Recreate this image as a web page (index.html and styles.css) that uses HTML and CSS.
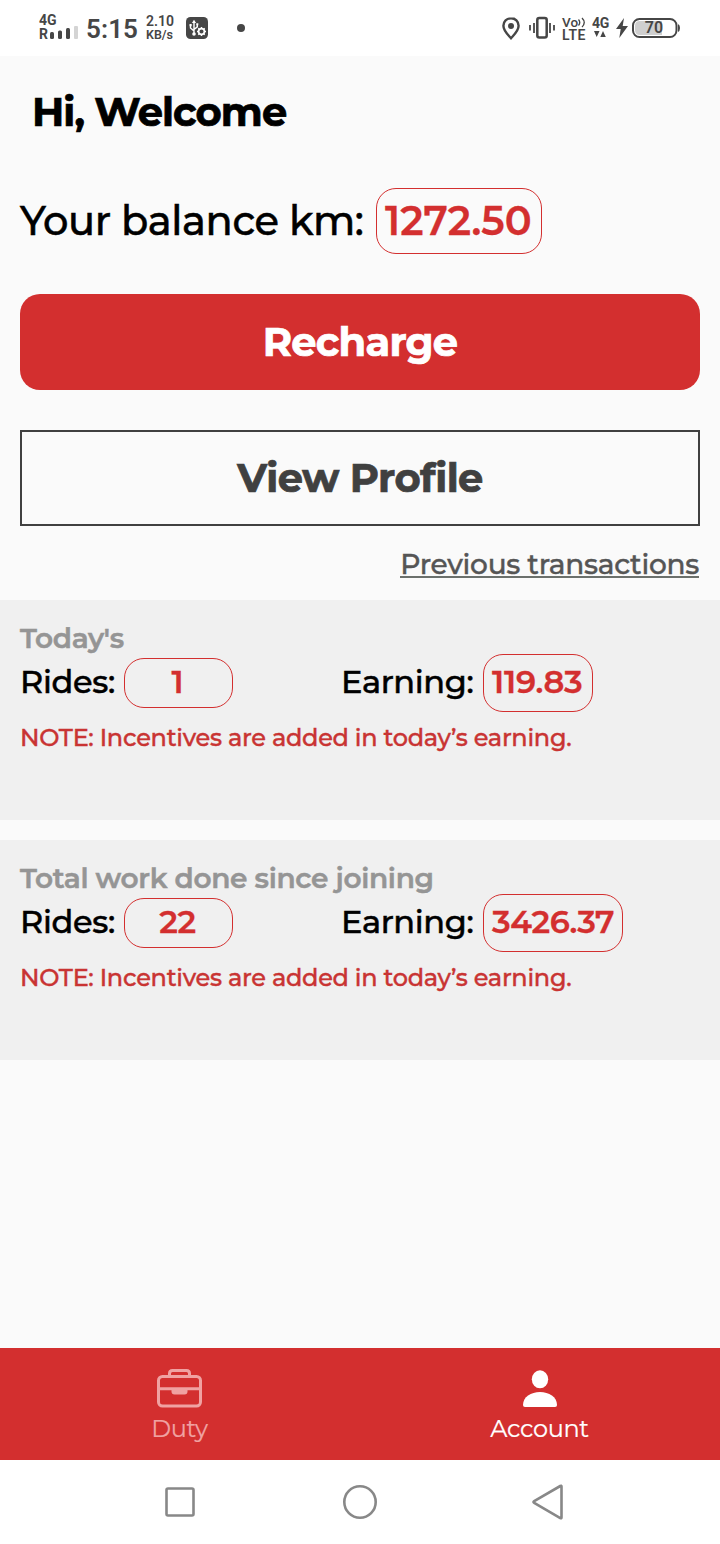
FILE: index.html
```html
<!DOCTYPE html>
<html lang="en">
<head>
<meta charset="utf-8">
<title>Account</title>
<link rel="stylesheet" href="styles.css">
</head>
<body>
<div class="screen">
  <header class="status">
    <div class="signal">
      <div class="net">4G</div>
      <div class="bars"><span>R</span><svg width="29" height="14" viewBox="0 0 29 14"><rect x="0" y="7" width="4" height="7" rx="1.500"/><rect x="8" y="5.500" width="4" height="8.500" rx="1.500"/><rect x="16" y="3" width="4" height="11" rx="1.500"/><rect class="dim" x="24" y="1" width="4" height="13" rx="1"/></svg></div>
    </div>
    <div class="time">5:15</div>
    <div class="speed"><div class="rate">2.10</div><div>KB/s</div></div>
    <svg class="usb" width="22" height="22" viewBox="0 0 22 22"><rect width="22" height="22" rx="4.500" fill="#464646"/><g fill="none" stroke="#fff" stroke-width="1.400"><path d="M8 5v12M4.500 8.500v2.500l3.500 3M11.300 7.500v2.300L8 12.500"/><circle cx="15.500" cy="14.500" r="2.900" stroke-width="1.700"/><path d="M15.500 10v1.600M15.500 17.400V19M11 14.500h1.600M18.400 14.500H20M12.300 11.300l1.200 1.200M17.500 16.500l1.200 1.200M18.700 11.300l-1.200 1.200M13.500 16.500l-1.200 1.200"/></g><path d="M8 2.800 5.900 6h4.200z" fill="#fff"/><circle cx="8" cy="17" r="1.800" fill="#fff"/><path d="M3.500 7h2.200v2.200H3.500zM10.300 6.300h2v2h-2z" fill="#fff"/></svg>
    <i class="dot"></i>
    <div class="status-right">
      <svg class="pin" width="18" height="23" viewBox="0 0 18 23"><path d="M9 1.300C4.700 1.300 1.400 4.500 1.400 8.800 1.400 14 6.200 18 9 21.200 11.800 18 16.600 14 16.600 8.800 16.600 4.500 13.300 1.300 9 1.300z" fill="none" stroke="#464646" stroke-width="2.400"/><circle cx="9" cy="9" r="3" fill="#464646"/></svg>
      <svg class="vibrate" width="26" height="24" viewBox="0 0 26 24" fill="none" stroke="#464646" stroke-width="2"><rect x="8.300" y="2" width="9.400" height="19.500" rx="2" stroke-width="2.500"/><path d="M5 7v10M1 9v5.500M21 7v10M25 9v5.500" stroke-width="1.800"/></svg>
      <div class="volte"><div class="vo">Vo<svg width="9" height="11" viewBox="0 0 9 11"><path d="M.500 2.500q2.500 3 0 6M4 1q4.500 4.500 0 9" fill="none" stroke="#464646" stroke-width="1.300"/></svg></div><div class="lte">LTE</div></div>
      <div class="data"><div>4G</div><svg width="12" height="6" viewBox="0 0 12 6"><path d="M0 0h5.500L2.700 6zM6.300 6h5.500L9 0z" fill="#464646"/></svg></div>
      <svg class="bolt" width="12" height="20" viewBox="0 0 12 20"><path d="M8 0 0 11h4.700L3.300 20 12 8H6.700z" fill="#464646"/></svg>
      <svg class="battery" width="49" height="20" viewBox="0 0 49 20"><rect x="1" y="1" width="43.500" height="18" rx="6.500" fill="#fff" stroke="#464646" stroke-width="2"/><path d="M8 3h22v14H8q-5 0-5-5V8q0-5 5-5z" fill="#cfcfcf"/><path d="M46 6q2 1 2 4t-2 4z" fill="#464646"/><text x="22" y="15.300" text-anchor="middle">70</text></svg>
    </div>
  </header>

  <main>
    <h1>Hi, Welcome</h1>
    <div class="balance"><span class="balance-label">Your balance km:</span><b class="pill pill-lg">1272.50</b></div>
    <button class="btn recharge">Recharge</button>
    <button class="btn profile">View Profile</button>
    <div class="prev"><a class="prev-link">Previous transactions</a></div>

    <section class="card">
      <h2>Today's</h2>
      <div class="row">
        <div class="rides"><span class="rides-label">Rides:</span><b class="pill count">1</b></div>
        <div class="earning"><span class="earning-label">Earning:</span><b class="pill sum sum-day">119.83</b></div>
      </div>
      <p class="note">NOTE: Incentives are added in today’s earning.</p>
    </section>
    <section class="card">
      <h2>Total work done since joining</h2>
      <div class="row">
        <div class="rides"><span class="rides-label">Rides:</span><b class="pill count">22</b></div>
        <div class="earning"><span class="earning-label">Earning:</span><b class="pill sum sum-all">3426.37</b></div>
      </div>
      <p class="note">NOTE: Incentives are added in today’s earning.</p>
    </section>
  </main>

  <nav class="tabs">
    <div class="tab duty">
      <svg width="46" height="42" viewBox="0 0 46 42" fill="none" stroke="currentColor" stroke-width="3"><rect x="1.500" y="9.500" width="42" height="29.500" rx="4"/><path d="M12.500 9V6.500q0-3 3-3h14q3 0 3 3V9M2 21.700h42"/><path d="M14.500 22h16v2.500q0 3-3 3h-10q-3 0-3-3z" fill="currentColor" stroke="none"/></svg>
      <span>Duty</span>
    </div>
    <div class="tab account">
      <svg width="46" height="42" viewBox="0 0 46 42" fill="currentColor"><ellipse cx="23" cy="12.300" rx="8.200" ry="9"/><path d="M6 38C6 30 14 25 23 25s17 5 17 13q0 2-2 2H8q-2 0-2-2z"/></svg>
      <span>Account</span>
    </div>
  </nav>
  <footer class="sysnav">
    <svg width="32" height="32" viewBox="0 0 32 32"><rect x="2.500" y="2.500" width="27" height="27" rx="1.500"/></svg>
    <svg width="36" height="36" viewBox="0 0 36 36"><circle cx="18" cy="18" r="15.700"/></svg>
    <svg width="36" height="38" viewBox="0 0 36 38"><path d="M32.500 3.500v31q0 1.200-1.200.6L5.200 20q-1.500-1 0-2L31.300 3q1.200-.7 1.200.5z"/></svg>
  </footer>
</div>
</body>
</html>
```
FILE: styles.css
```css
* { box-sizing: border-box; }
body { margin: 0; background: #fafafa; font-family: Montserrat, Inter, sans-serif; color: #000; }
.screen { width: 720px; height: 1544px; display: flex; flex-direction: column; white-space: nowrap; }
h1, h2, p { margin: 0; }
svg { display: block; flex: none; }

.status { height: 56px; background: #fff; display: flex; align-items: flex-start; color: #464646; font-family: Roboto, sans-serif; padding-left: 39px; }
.signal { width: 47px; padding-top: 13px; font-weight: 700; font-size: 14px; line-height: 14px; }
.bars { display: flex; align-items: flex-start; gap: 1px; font-size: 14px; }
.bars span { width: 10px; }
.bars svg { margin-top: -2px; fill: #464646; }
.bars .dim { fill: #d4d4d4; }
.time { width: 60px; padding-top: 14px; font-size: 26px; line-height: 30px; font-weight: 600; letter-spacing: .1px; }
.speed { width: 40px; padding-top: 15px; font-size: 12.500px; line-height: 14px; font-weight: 600; }
.rate { font-size: 14px; line-height: 13px; }
.usb { margin-top: 17px; }
.dot { width: 8px; height: 8px; margin: 24px 0 0 29px; border-radius: 50%; background: #464646; }
.status-right { display: flex; margin-left: 257px; }
.pin { margin-top: 17px; }
.vibrate { margin: 16px 0 0 9px; }
.volte { width: 30px; margin: 16px 0 0 7px; font-size: 13px; line-height: 12px; font-weight: 600; }
.vo { display: flex; align-items: center; height: 12px; font-size: 13.500px; font-weight: 500; }
.lte { font-size: 14px; line-height: 14px; letter-spacing: .5px; }
.data { width: 24px; margin-top: 16px; font-size: 14px; line-height: 15px; font-weight: 700; letter-spacing: -.4px; }
.data svg { margin: 0 0 0 2px; }
.bolt { margin-top: 18px; }
.battery { margin: 18px 0 0 4px; }
.battery text { font: 600 16px Roboto, sans-serif; fill: #464646; }

main { flex: 1; }
h1 { padding: 36px 0 0 32px; font-size: 40px; line-height: 40px; font-weight: 700; letter-spacing: -.95px; -webkit-text-stroke: .7px; }
.balance { display: flex; align-items: center; height: 66px; margin: 56px 20px 0; font-size: 40px; font-weight: 500; }
.balance-label { width: 356px; flex: none; padding-bottom: 1px; letter-spacing: -.4px; -webkit-text-stroke: .5px; }
.pill { display: flex; align-items: center; border: 1px solid #d32f2f; border-radius: 20px; color: #d32f2f; font-weight: 600; flex: none; -webkit-text-stroke: .3px; }
.pill-lg { width: 166px; height: 66px; padding: 0 0 1px 8px; }
.btn { display: flex; align-items: center; justify-content: center; width: 680px; height: 96px; margin: 40px 20px 0; padding: 0 0 2px; font: 700 40px Montserrat, Inter, sans-serif; letter-spacing: -.75px; -webkit-text-stroke: .7px; }
.recharge { border: 0; border-radius: 20px; background: #d32f2f; color: #fff; }
.profile { border: 2px solid #404040; background: #fafafa; color: #404040; letter-spacing: -.55px; }
.prev { display: flex; justify-content: flex-end; height: 74px; padding: 22px 21px 0 0; font-size: 28px; line-height: 32px; font-weight: 500; letter-spacing: -.27px; color: #555; -webkit-text-stroke: .4px; }
.prev-link { height: 30px; border-bottom: 2px solid #6b706c; }

.card { height: 220px; margin-bottom: 20px; padding: 22px 20px 0; background: #f0f0f0; }
h2 { height: 32px; font-size: 28px; line-height: 33px; font-weight: 600; letter-spacing: -.32px; color: #959595; -webkit-text-stroke: .5px; }
.row { display: flex; align-items: center; height: 58px; font-size: 32px; line-height: 38px; font-weight: 500; letter-spacing: -.35px; }
.rides { display: flex; align-items: center; width: 321px; }
.rides-label, .earning-label { padding-bottom: 2px; -webkit-text-stroke: .5px; }
.rides-label { width: 104px; }
.count { justify-content: center; width: 109px; height: 50px; padding: 0 2px 2px 0; }
.earning { display: flex; align-items: center; }
.earning-label { width: 142px; }
.sum { height: 58px; padding: 0 0 2px 8px; }
.sum-day { width: 110px; letter-spacing: -.2px; }
.sum-all { width: 140px; letter-spacing: -.45px; }
.note { margin-top: 10px; font-size: 24px; line-height: 32px; font-weight: 500; letter-spacing: -.27px; color: #c93433; -webkit-text-stroke: .4px; }

.tabs { display: flex; height: 112px; background: #d32f2f; font-size: 24px; line-height: 28px; letter-spacing: -.35px; }
.tab { width: 50%; display: flex; flex-direction: column; align-items: center; padding-top: 19px; color: #fff; }
.tab span { margin: 6px 1px 0 0; -webkit-text-stroke: .2px; }
.duty { color: #f0a2a2; }
.sysnav { display: flex; align-items: center; height: 84px; background: #fff; padding-left: 164px; }
.sysnav svg { fill: none; stroke: #888; stroke-width: 2.600; }
.sysnav svg:nth-child(2) { margin-left: 146px; }
.sysnav svg:nth-child(3) { margin-left: 151px; }
```
